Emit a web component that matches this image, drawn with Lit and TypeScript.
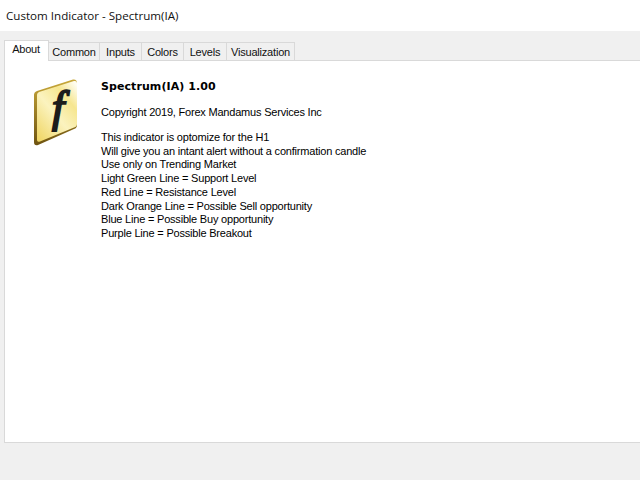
import { css, html, LitElement } from "lit";
import { customElement } from "lit/decorators.js";

const TABS = [
  { label: "Common", width: 51 },
  { label: "Inputs", width: 42 },
  { label: "Colors", width: 42 },
  { label: "Levels", width: 43 },
  { label: "Visualization", width: 68 },
];

const NOTES = [
  "This indicator is optomize for the H1",
  "Will give you an intant alert without a confirmation candle",
  "Use only on Trending Market",
  "Light Green Line = Support Level",
  "Red Line = Resistance Level",
  "Dark Orange Line = Possible Sell opportunity",
  "Blue Line = Possible Buy opportunity",
  "Purple Line = Possible Breakout",
];

@customElement("app-root")
export class AppRoot extends LitElement {
  static override styles = css`
    :host {
      display: flex;
      flex-direction: column;
      width: 640px;
      height: 480px;
      overflow: hidden;
      background: #f0f0f0;
      color: #000;
      font-family: "Liberation Sans", Arial, sans-serif;
      font-size: 11px;
      letter-spacing: -0.2px;
    }

    .title {
      height: 31px;
      flex: none;
      box-sizing: border-box;
      padding: 9px 0 0 6px;
      background: #fff;
      font-family: "Open Sans", sans-serif;
      font-size: 11.6px;
      letter-spacing: 0;
      line-height: 14px;
      color: #111;
    }

    .dialog {
      flex: 1;
      display: flex;
      flex-direction: column;
      padding: 9px 0 37px 4px;
      min-height: 0;
    }

    .tabs {
      display: flex;
      align-items: flex-end;
      height: 21px;
      flex: none;
      position: relative;
      z-index: 1;
      margin-bottom: -1px;
    }

    .tab {
      box-sizing: border-box;
      height: 19px;
      padding-top: 2px;
      line-height: 15px;
      text-align: center;
      background: #f0f0f0;
      border: 1px solid #d9d9d9;
      border-left: none;
      color: #111;
    }

    .tab.active {
      height: 21px;
      width: 45px;
      padding: 1px 1px 0 0;
      background: #fff;
      border-left: 1px solid #d9d9d9;
      border-bottom: none;
    }

    .panel {
      flex: 1;
      display: flex;
      background: #fff;
      border: 1px solid #d9d9d9;
      border-right: none;
      padding: 17px 0 0 27px;
    }

    .logo {
      width: 48px;
      height: 70px;
      flex: none;
      margin-right: 21px;
    }

    .logo text {
      font-family: "Liberation Serif", serif;
      font-style: italic;
      font-size: 44px;
      letter-spacing: 0;
      stroke: #1c1c1c;
      stroke-width: 2px;
    }

    .name {
      margin-top: 1px;
      font-family: "DejaVu Sans", sans-serif;
      font-size: 11px;
      font-weight: bold;
      letter-spacing: 0.08px;
      line-height: 15px;
    }

    .copy {
      margin-top: 11px;
      line-height: 14px;
    }

    .notes {
      margin-top: 12px;
      line-height: 13.7px;
    }
  `;

  override render() {
    return html`
      <div class="title">Custom Indicator - Spectrum(IA)</div>
      <div class="dialog">
        <div class="tabs">
          <div class="tab active">About</div>
          ${TABS.map(
            (t) => html`<div class="tab" style="width:${t.width}px">${t.label}</div>`,
          )}
        </div>
        <div class="panel">
          <svg class="logo" viewBox="0 0 48 70">
            <defs>
              <linearGradient id="face" x1="0.1" y1="1" x2="0.9" y2="0">
                <stop offset="0" stop-color="#f0d768" />
                <stop offset="0.45" stop-color="#fbf3bf" />
                <stop offset="0.75" stop-color="#f6e690" />
                <stop offset="1" stop-color="#fffdf0" />
              </linearGradient>
              <linearGradient id="edge" x1="0" y1="0" x2="0" y2="1">
                <stop offset="0" stop-color="#c9a93a" />
                <stop offset="1" stop-color="#6e5310" />
              </linearGradient>
            </defs>
            <path
              d="M5 13 L41 1.5 Q45 1 45 5 L45 47 Q45 50 42 51 L6 67 Q2 68 2 64 L2 17 Q2 14 5 13 Z"
              fill="url(#edge)"
            />
            <path
              d="M7 14 L42 3 Q45 2.5 45 5 L45 46 Q45 48.5 42 49.5 L8 63.5 Q5 64.5 5 62 L5 17 Q5 15 7 14 Z"
              fill="url(#face)"
            />
            <text x="20" y="44" fill="#1c1c1c">f</text>
          </svg>
          <div class="body">
            <div class="name">Spectrum(IA) 1.00</div>
            <div class="copy">Copyright 2019, Forex Mandamus Services Inc</div>
            <div class="notes">
              ${NOTES.map((n) => html`<div>${n}</div>`)}
            </div>
          </div>
        </div>
      </div>
    `;
  }
}
